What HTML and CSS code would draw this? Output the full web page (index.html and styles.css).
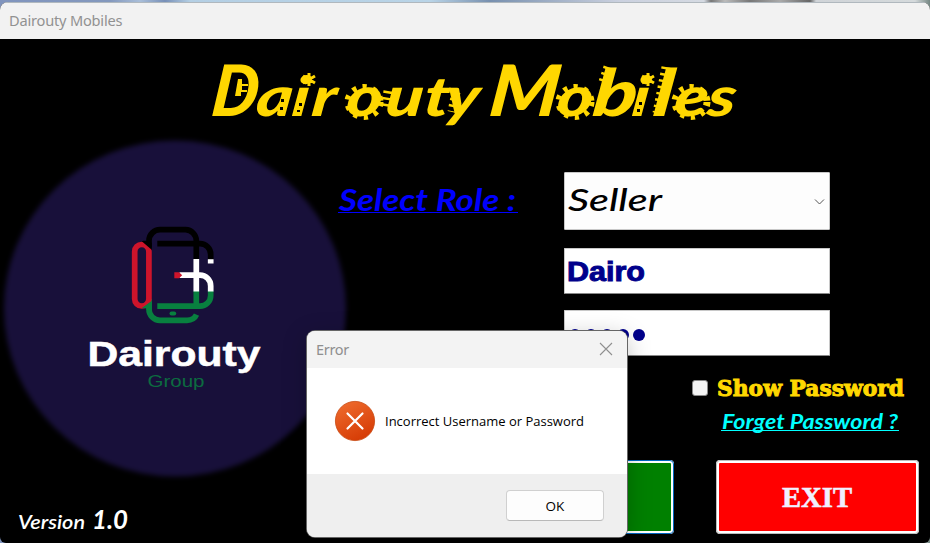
FILE: index.html
```html
<!DOCTYPE html>
<html lang="en">
<head>
<meta charset="utf-8">
<title>Dairouty Mobiles</title>
<link rel="stylesheet" href="styles.css">
</head>
<body>
<div class="window">
  <header class="titlebar"><span>Dairouty Mobiles</span></header>
  <main class="login">
    <h1 class="banner">
      <svg width="930" height="101" viewBox="0 39 930 101">
        <g class="banner-text" transform="matrix(1.25 0 -.12 1 13.900 0)">
          <text class="cap" y="116" x="168" textLength="37" lengthAdjust="spacingAndGlyphs">D</text>
          <text y="116" x="204 232.500 248.500 276 307.500 338 355">airouty</text>
          <text class="cap" y="116" x="390" textLength="56" lengthAdjust="spacingAndGlyphs">M</text>
          <text y="116" x="444.500 473 504.500 521.500 538.500 565">o<tspan class="tall">b</tspan>i<tspan class="tall">l</tspan>es</text>
        </g>
        <g class="gear">
          <ellipse cx="364" cy="102" rx="16" ry="14.500"/>
          <ellipse cx="575" cy="102" rx="16" ry="14.500"/>
          <ellipse cx="691" cy="102" rx="16" ry="14.500"/>
        </g>
        <g class="teeth">
          <path d="M388 91l-3 18M456 92l-4 20M608 67l-5 15M666 67l-9 46"/>
        </g>
        <g class="star">
          <path d="M309 73v13M303 76l12 7M315 76l-12 7M648 73v13M642 76l12 7M654 76l-12 7"/>
        </g>
        <g class="notch">
          <path d="M281 99h3v3h-3zM280 107h3v3h-3zM299 103h3v3h-3zM297 110h3v2h-3zM639 102h3v3h-3zM637 109h3v3h-3z"/>
        </g>
        <path class="notch-fill" d="M238 79h4v5h6v2h-6v4h5v2h-6v4h-6z"/>
      </svg>
    </h1>
    <div class="columns">
      <section class="brand">
        <svg class="logo" width="350" height="350" viewBox="0 134 350 350">
          <ellipse class="disc" cx="175" cy="308.5" rx="171" ry="168"/>
          <g class="mark">
            <g class="green">
              <path d="M149 299V309a11 11 0 0 0 11 11.3H187q7 0 9.500-5.600M157.300 306.200H200a10.700 10.700 0 0 0 10.700-10.700V291M196.300 291v15"/>
              <path class="home" d="M171.500 313.600h2.700"/>
            </g>
            <g class="black"><path d="M149 247v-6.500a11 11 0 0 1 11-10.800h25.500a11 11 0 0 1 10.800 10.800V259.500M157.300 243.700H200a10.700 10.700 0 0 1 10.700 10.700v5M143 243.700h6"/></g>
            <g class="red">
              <rect x="134.700" y="244.500" width="14.200" height="61.500" rx="7"/>
            </g>
            <path class="fill-black" d="M141.500 241h7l3.400 2v7z"/>
            <path class="fill-green" d="M141.500 308.300l10.400-7.500v9h-5.500v-1.500z"/>
            <g class="white"><path d="M196.300 259v32.500M179.500 275.200H200a10.700 10.700 0 0 1 10.700 10.700v5.600M210.700 259.300v4.200"/></g>
            <path class="fill-red" d="M174.300 272.200h4.700l3.200 3-3.200 3h-4.700z"/>
          </g>
          <text class="logo-name" x="87.500" y="366" textLength="173" lengthAdjust="spacingAndGlyphs">Dairouty</text>
          <text class="logo-sub" x="147.500" y="387" textLength="57" lengthAdjust="spacingAndGlyphs">Group</text>
        </svg>
        <svg class="version" width="150" height="40" viewBox="0 500 150 40">
          <text x="18" y="528.500" class="version-word" textLength="67" lengthAdjust="spacingAndGlyphs">Version</text>
          <text x="92" y="528.500" class="version-number" textLength="36" lengthAdjust="spacingAndGlyphs">1.0</text>
        </svg>
      </section>
      <section class="fields">
        <div class="role-row">
          <svg class="role-label" width="230" height="58" viewBox="334 172 230 58">
            <text x="339" y="211" textLength="177" lengthAdjust="spacingAndGlyphs">Select Role :</text>
            <path d="M338 212.500H518"/>
          </svg>
          <div class="select">
            <svg width="264" height="56" viewBox="565 173 264 56">
              <text x="568" y="211" textLength="94" lengthAdjust="spacingAndGlyphs">Seller</text>
              <path d="M815 199.500l4.500 4.500 4.500-4.500"/>
            </svg>
          </div>
        </div>
        <div class="input username">
          <svg width="264" height="44" viewBox="565 249 264 44"><text x="567" y="281" textLength="78" lengthAdjust="spacingAndGlyphs">Dairo</text></svg>
        </div>
        <div class="input password"><i></i><i></i><i></i><i></i><i></i></div>
        <label class="show">
          <span class="check"></span>
          <svg width="192" height="30" viewBox="715 374 192 30"><text x="717" y="396" textLength="187" lengthAdjust="spacingAndGlyphs">Show Password</text></svg>
        </label>
        <a class="forget">
          <svg width="180" height="34" viewBox="720 406 180 34">
            <text x="722" y="428.500" textLength="176" lengthAdjust="spacingAndGlyphs">Forget Password ?</text>
            <path d="M721 430.500H899"/>
          </svg>
        </a>
        <div class="actions">
          <div class="button login-button"></div>
          <div class="button exit-button">
            <svg width="74" height="40" viewBox="780 477 74 40"><text x="781" y="507" textLength="70" lengthAdjust="spacingAndGlyphs">EXIT</text></svg>
          </div>
        </div>
      </section>
    </div>
  </main>
</div>
<div class="dialog" role="alertdialog">
  <div class="dialog-title">
    <span>Error</span>
    <svg width="14" height="14" viewBox="0 0 14 14"><path d="M1 1l12 12M13 1L1 13"/></svg>
  </div>
  <div class="dialog-body">
    <svg width="40" height="40" viewBox="0 0 40 40">
      <defs><linearGradient id="alert" x1=".2" y1="0" x2=".7" y2="1"><stop offset="0" stop-color="#ee6b2d"/><stop offset="1" stop-color="#d53a04"/></linearGradient></defs>
      <circle cx="20" cy="20" r="19.600" fill="url(#alert)" stroke="#c8480f" stroke-width=".8"/>
      <path d="M12.500 12.500l15 15M27.500 12.500l-15 15"/>
    </svg>
    <svg width="210" height="24" viewBox="384 409 210 24"><text x="385" y="426" textLength="199" lengthAdjust="spacingAndGlyphs">Incorrect Username or Password</text></svg>
  </div>
  <div class="dialog-footer"><div class="ok">OK</div></div>
</div>
</body>
</html>
```
FILE: styles.css
```css
* { box-sizing: border-box; }
body {
  margin: 0;
  width: 930px;
  height: 543px;
  overflow: hidden;
  position: relative;
  padding-top: 2px;
  font-family: "Open Sans", "Noto Sans", sans-serif;
  background: linear-gradient(90deg, #8094bd 0, #8398bd 110px, #a9bed9 140px, #7890b8 165px, #b4cfe4 190px, #b9d4e7 430px, #7890af 490px, #cbd1df 620px, #d5dae2 704px, #777 711px, #bbb 725px, #777 750px, #aaa 780px, #666 810px, #d0d4d8 816px, #d5dadc 915px, #758783 930px);
}
svg { display: block; flex: none; overflow: visible; }
.window { height: 541px; border-radius: 8px 8px 6px 6px; overflow: hidden; background: #000; }
.titlebar { height: 37px; padding: 0 0 2px 9px; display: flex; align-items: center; background: #f2f2f2; border-top: 1px solid #b0b8be; color: #919191; }
.titlebar span { font: 14.600px "Noto Sans", sans-serif; letter-spacing: -.2px; }
.banner { margin: 0; height: 101px; }
.banner-text { fill: #ffd700; font: italic 900 55px Lato, sans-serif; }
.banner-text .cap { font-size: 71px; }
.banner-text .tall { font-size: 65px; }
.gear { fill: none; stroke: #ffd700; stroke-width: 7; stroke-dasharray: 4 6; }
.teeth { fill: none; stroke: #ffd700; stroke-width: 9; stroke-dasharray: 2.500 4; }
.star { fill: none; stroke: #ffd700; stroke-width: 3; }
.notch { fill: #000; }
.notch-fill { fill: #ffd700; }
.columns { display: flex; height: 403px; }
.brand { width: 334px; flex: none; }
.logo { margin-top: -6px; }
.disc { fill: #18103a; filter: blur(2.500px); }
.mark g { fill: none; stroke-width: 5.700; }
.mark .green { stroke: #08803f; }
.mark .home { stroke-width: 4; stroke-linecap: round; }
.mark .black { stroke: #000; }
.mark .red { stroke: #ce142b; }
.mark .white { stroke: #fff; }
.fill-black { fill: #000; }
.fill-green { fill: #08803f; }
.fill-red { fill: #ce142b; }
.logo-name { fill: #fff; stroke: #fff; stroke-width: .5px; font: 700 35px "Liberation Sans", sans-serif; }
.logo-sub { fill: #0c6b40; font: 400 16px "Liberation Sans", sans-serif; }
.version { margin-top: 16px; fill: #fff; }
.version-word { font: italic 600 20px Lato, sans-serif; }
.version-number { font: italic 700 27px Lato, sans-serif; }
.fields { width: 596px; padding-top: 32px; }
.role-row { display: flex; }
.role-label text { fill: #00f; font: italic 700 30px Lato, sans-serif; }
.role-label path { stroke: #00f; }
.select, .input { width: 266px; border: 1px solid #c8c8c8; border-radius: 1px; background: #fdfdfd; }
.select { height: 58px; }
.select text { font: italic 500 31px Lato, sans-serif; }
.select path { fill: none; stroke: #555; }
.input { height: 46px; background: #fff; border-bottom-color: #888; margin-left: 230px; }
.username { margin-top: 18px; }
.username text { fill: #00008b; stroke: #00008b; stroke-width: 1px; font: 700 28px "Liberation Sans", sans-serif; }
.password { margin-top: 16px; padding: 4px 0 0 4px; display: flex; align-items: center; gap: 4px; }
.password i { width: 12px; height: 12px; border-radius: 50%; background: #00008b; }
.show { display: flex; align-items: center; height: 30px; margin: 18px 0 0 358px; }
.check { width: 16px; height: 16px; margin: -2px 7px 0 0; border: 1px solid #888; border-radius: 3px; background: #f3f3f3; }
.show text { fill: #ffd700; stroke: #ffd700; stroke-width: 1px; font: 700 21.500px "DejaVu Serif", serif; }
.forget { display: block; margin: 2px 0 0 386px; }
.forget text { fill: #0ff; font: italic 700 20px Lato, sans-serif; }
.forget path { stroke: #0ff; }
.actions { display: flex; gap: 42px; margin: 20px 0 0 138px; }
.button { width: 203px; height: 74px; border: 3px solid #fff; border-radius: 4px; display: flex; align-items: center; justify-content: center; outline: 1px solid #bbb; outline-offset: -1px; }
.login-button { width: 202px; background: #008000; outline-color: #0067c0; }
.exit-button { background: #f00; }
.exit-button text { fill: #f0f0ff; stroke: #f0f0ff; stroke-width: .6px; font: 700 30px "Liberation Serif", serif; }
.dialog { position: absolute; left: 307px; top: 331px; width: 320px; height: 206px; border-radius: 8px; overflow: hidden; background: #fff; box-shadow: 0 0 0 1px #666, 0 6px 24px rgba(0,0,0,.25); }
.dialog-title { height: 37px; padding: 0 14px 1px 9px; display: flex; align-items: center; justify-content: space-between; background: #f3f3f3; color: #8f8f8f; font: 14.500px "Noto Sans", sans-serif; }
.dialog-title span { margin-top: -1px; letter-spacing: -.3px; }
.dialog-title svg path { stroke: #8f8f8f; stroke-width: 1.100; }
.dialog-body { height: 106px; padding-left: 28px; display: flex; align-items: center; gap: 9px; }
.dialog-body path { stroke: #fff; stroke-width: 2.200; stroke-linecap: round; }
.dialog-body text { font: 13.500px "Open Sans", sans-serif; }
.dialog-footer { height: 63px; padding: 16px 23px 0 0; display: flex; justify-content: flex-end; background: #efefef; }
.ok { width: 98px; height: 31px; border: 1px solid #d0d0d0; border-bottom-color: #b9b9b9; border-radius: 4px; background: #fdfdfd; text-align: center; font: 13.500px/30px "Open Sans", sans-serif; }
```
